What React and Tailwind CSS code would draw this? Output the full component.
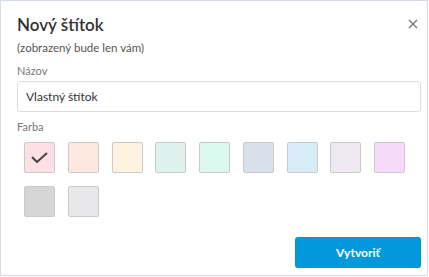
import React from "react";

const swatches = [
  { bg: "bg-[#fde0e6]", checked: true },
  { bg: "bg-[#fde8e0]" },
  { bg: "bg-[#fff3e0]" },
  { bg: "bg-[#ddf2ec]" },
  { bg: "bg-[#dcf9ef]" },
  { bg: "bg-[#d8e1ea]" },
  { bg: "bg-[#d8ecf7]" },
  { bg: "bg-[#efe9f2]" },
  { bg: "bg-[#f5dafb]" },
  { bg: "bg-[#d6d6d6]" },
  { bg: "bg-[#e8e8ea]" },
];

export default function App() {
  return (
    <div
      className="w-[428px] h-[276px] border border-[#d3dce8] bg-white flex flex-col text-[#333]"
      style={{ fontFamily: "Lato, 'Noto Sans', sans-serif" }}
    >
      <div className="flex justify-between items-start pl-4 pr-[8px] pt-[12px]">
        <h1 className="text-[17px] leading-[24px] font-semibold text-[#333]">Nový štítok</h1>
        <button className="mt-[5px] w-[12px] h-[12px] flex items-center justify-center text-[#777]">
          <svg width="10" height="10" viewBox="0 0 10 10" fill="none" stroke="currentColor" strokeWidth="1.4">
            <path d="M1 1 L9 9 M9 1 L1 9" />
          </svg>
        </button>
      </div>
      <p className="pl-4 mt-[3px] text-[11.5px] leading-[16px] text-[#555]">(zobrazený bude len vám)</p>
      <label className="pl-4 mt-[8px] text-[11px] leading-[14px] text-[#777]">Názov</label>
      <div className="pl-4 pr-[6px] mt-[3px]">
        <div className="h-[31px] border border-[#dcdcdc] rounded-[3px] flex items-center px-2 text-[12px] text-[#333]">
          Vlastný štítok
        </div>
      </div>
      <label className="pl-4 mt-[8px] text-[11px] leading-[14px] text-[#777]">Farba</label>
      <div className="pl-[23px] mt-[8px] flex flex-wrap gap-x-[12.75px] gap-y-[13px] w-[420px]">
        {swatches.map((s, i) => (
          <div
            key={i}
            className={`w-[31px] h-[31px] rounded-[2px] border-[1.5px] border-[#cacaca] ${s.bg} flex items-center justify-center`}
          >
            {s.checked && (
              <svg width="17" height="11" viewBox="0 0 17 11" fill="none" stroke="#444" strokeWidth="2">
                <path d="M1 5 L6 10 L16 1" />
              </svg>
            )}
          </div>
        ))}
      </div>
      <div className="flex-1" />
      <div className="flex justify-end pr-[6px] pb-[7px]">
        <button className="w-[126px] h-[31px] rounded-[3px] bg-[#0397dc] text-white text-[12px] font-bold">
          Vytvoriť
        </button>
      </div>
    </div>
  );
}
